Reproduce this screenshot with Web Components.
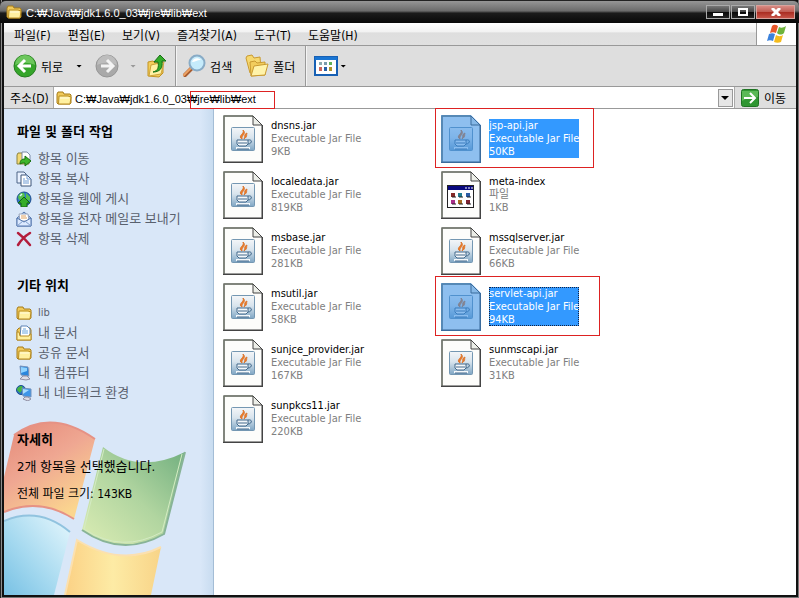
<!DOCTYPE html>
<html lang="ko">
<head>
<meta charset="utf-8">
<title>ext</title>
<style>
    body {
        margin: 0;
        font-family: "DejaVu Sans Condensed", "Noto Sans CJK KR", sans-serif;
        font-size: 11px;
        color: #000;
    }
</style>
</head>
<body>
<xp-window caption="C:₩Java₩jdk1.6.0_03₩jre₩lib₩ext">
    <xp-menubar slot="bars">
        <button>파일(F)</button>
        <button>편집(E)</button>
        <button>보기(V)</button>
        <button>즐겨찾기(A)</button>
        <button>도구(T)</button>
        <button>도움말(H)</button>
    </xp-menubar>
    <xp-toolbar slot="bars"></xp-toolbar>
    <xp-address slot="bars" path="C:₩Java₩jdk1.6.0_03₩jre₩lib₩ext"></xp-address>
    <xp-sidebar slot="side">
        <task-section>
            <span slot="title">파일 및 폴더 작업</span>
            <task-link icon="move">항목 이동</task-link>
            <task-link icon="copy">항목 복사</task-link>
            <task-link icon="web">항목을 웹에 게시</task-link>
            <task-link icon="mail">항목을 전자 메일로 보내기</task-link>
            <task-link icon="delete">항목 삭제</task-link>
        </task-section>
        <task-section>
            <span slot="title">기타 위치</span>
            <task-link icon="folder" latin>lib</task-link>
            <task-link icon="documents">내 문서</task-link>
            <task-link icon="folder">공유 문서</task-link>
            <task-link icon="computer">내 컴퓨터</task-link>
            <task-link icon="network">내 네트워크 환경</task-link>
        </task-section>
        <task-section class="details">
            <span slot="title">자세히</span>
            <task-note>2개 항목을 선택했습니다.</task-note>
            <task-note small>전체 파일 크기: 143KB</task-note>
        </task-section>
    </xp-sidebar>
    <file-list>
        <file-item name="dnsns.jar" kind="Executable Jar File" size="9KB"></file-item>
        <file-item name="jsp-api.jar" kind="Executable Jar File" size="50KB" selected marked></file-item>
        <file-item name="localedata.jar" kind="Executable Jar File" size="819KB"></file-item>
        <file-item name="meta-index" kind="파일" size="1KB" icon="plain"></file-item>
        <file-item name="msbase.jar" kind="Executable Jar File" size="281KB"></file-item>
        <file-item name="mssqlserver.jar" kind="Executable Jar File" size="66KB"></file-item>
        <file-item name="msutil.jar" kind="Executable Jar File" size="58KB"></file-item>
        <file-item name="servlet-api.jar" kind="Executable Jar File" size="94KB" selected focused marked="wide"></file-item>
        <file-item name="sunjce_provider.jar" kind="Executable Jar File" size="167KB"></file-item>
        <file-item name="sunmscapi.jar" kind="Executable Jar File" size="31KB"></file-item>
        <file-item name="sunpkcs11.jar" kind="Executable Jar File" size="220KB"></file-item>
    </file-list>
</xp-window>

<script>
const PAGE = `
    <path d="M1 1h29l9 9v37H1z" fill="#fdfdfb" stroke="#777"/>
    <path d="M1 47V1h29" fill="none" stroke="#6f746a" stroke-width="1.5"/>
    <path d="M0 47.5h40M39.5 10v38" stroke="#444" stroke-width="1.5"/>
    <path d="M30 1v9h9z" fill="#eceee8" stroke="#444"/>`;

const FOLDER = `
    <path d="M1 4l1-2h5l1 2h6l1 1v8l-1 1H2l-1-1z" fill="#f0c95a" stroke="#a67c18"/>
    <path d="M3 6h9l3 1-1 7H2.5z" fill="#fff0a0" stroke="#b98d22"/>
    <path d="M4 8h9" stroke="#fffbe0"/>`;

// name: [width, height, viewBox, shapes]
const ICONS = {
    folder: [16, 16, '0 0 16 16', FOLDER],
    move: [16, 16, '0 0 16 16', `
        <path d="M1 4l1-2h4l1 2h6v9H1z" fill="#f3d873" stroke="#8c8340"/>
        <path d="M6 1h5l3 3v6H6z" fill="#fff" stroke="#7c8ca8"/>
        <path d="M4 13c0-4 2-5 5-5V5l6 5-6 5v-3c-2 0-4 0-5 1z" fill="#3eb52b" stroke="#18720f"/>`],
    copy: [16, 16, '0 0 16 16', `
        <path d="M1 1h7l2 2v9H1z" fill="#e8f1ff" stroke="#4c6487"/>
        <path d="M5 4h6l4 4v7H5z" fill="#fff" stroke="#3c5478"/>
        <path d="M11 4v4h4M7 8h2M7 10h6M7 12h6" fill="none" stroke="#6d9ad3"/>`],
    web: [16, 16, '0 0 16 16', `
        <circle cx="8" cy="8" r="7" fill="#2f79c9" stroke="#1d4d8c"/>
        <path d="M2 6c1-4 4-5 6-4l1 3-3 3-3 1zM10 2l4 4v4l-4-2z" fill="#54c14a"/>
        <path d="M8 6l6 6h-3v4H5v-4H2z" fill="#36ad28" stroke="#12650f"/>
        <path d="M4 5l2-2" stroke="#dff5ff" stroke-width="1.5"/>`],
    mail: [16, 16, '0 0 16 16', `
        <path d="M1 7l7-6 7 6v8H1z" fill="#a9c5ed" stroke="#5577ad"/>
        <path d="M3 3h9l1 7H4z" fill="#fff" stroke="#98a4bb"/>
        <path d="M5 5h5M5 7h6" stroke="#e0a05c"/>
        <path d="M1 7l7 4 7-4v8H1z" fill="#dceaff" stroke="#5577ad"/>
        <path d="M1 15l6-5M15 15l-6-5" stroke="#7f9ecc"/>`],
    delete: [16, 16, '0 0 16 16', `
        <path d="M2 2c4 3 8 7 12 12M14 2C9 5 5 9 2 14" fill="none" stroke="#b31d3c" stroke-width="2.5" stroke-linecap="round"/>`],
    documents: [16, 16, '0 0 16 16', `
        <path d="M1 5l2-2h11l1 2v10H1z" fill="#efca5e" stroke="#a67c18"/>
        <path d="M5 1h6l3 3v8H4z" fill="#fff" stroke="#5d83b7"/>
        <path d="M7 4h3M6 6h6M6 8h6" stroke="#68a4df"/>
        <path d="M1 7h2l1 4h9l1-2h1v6H1z" fill="#fff0a0" stroke="#b98d22"/>`],
    computer: [16, 16, '0 0 16 16', `
        <path d="M4 1l8 1 1 9-8-1z" fill="#2a86dd" stroke="#7592bb"/>
        <path d="M5 2l6 1v3L5 8z" fill="#8fd3ff"/>
        <path d="M13 2l1 1v8l-1 1z" fill="#c9cdd8"/>
        <path d="M7 11h4l3 3-4 1-6-1z" fill="#dedde6" stroke="#8f8fa3"/>`],
    network: [16, 16, '0 0 16 16', `
        <circle cx="5" cy="5" r="4.5" fill="#2870c4" stroke="#1c4f91"/>
        <path d="M1 5c0-3 3-4 5-4l1 3-3 4z" fill="#46b641"/>
        <path d="M6 3l9 1v8l-8-1z" fill="#3d95e8" stroke="#7592bb"/>
        <path d="M7 4l6 1-6 4z" fill="#a7dcff"/>
        <path d="M9 12h3l3 2-3 2-5-2z" fill="#dedde6" stroke="#8f8fa3"/>`],
    back: [24, 24, '0 0 24 24', `
        <circle cx="12" cy="12" r="11" fill="#35a52a" stroke="#267d20"/>
        <path d="M2 11a10 10 0 0 1 20 0c-6-3-14-3-20 0z" fill="#6cc65c"/>
        <path d="M12 6l-6 6 6 6M7 12h11" fill="none" stroke="#fff" stroke-width="3"/>`],
    forward: [24, 24, '0 0 24 24', `
        <circle cx="12" cy="12" r="11" fill="#a9a9a9" stroke="#969696"/>
        <path d="M2 11a10 10 0 0 1 20 0c-6-3-14-3-20 0z" fill="#bdbdbd"/>
        <path d="M12 6l6 6-6 6M17 12H6" fill="none" stroke="#f4f4f4" stroke-width="3"/>`],
    up: [20, 24, '0 0 20 24', `
        <path d="M1 8l5-1 2 2 8-1v11l-4 4-11-1z" fill="#f3ce5b" stroke="#c39425"/>
        <path d="M4 11l13-3-3 12-12 2z" fill="#fff1a3" stroke="#cda239"/>
        <path d="M6 18c5-1 6-5 5-10H7l6-7 6 6h-4c1 7-2 11-9 11z" fill="#35ad2b" stroke="#176f14"/>`],
    search: [24, 24, '0 0 24 24', `
        <path d="M10 14l-7 7" stroke="#a65b2f" stroke-width="4" stroke-linecap="round"/>
        <path d="M9 14l-7 7" stroke="#eda163" stroke-width="2" stroke-linecap="round"/>
        <circle cx="15" cy="9" r="7.5" fill="#c5ebfb" stroke="#88abc6" stroke-width="2"/>
        <path d="M10 8c1-4 6-5 9-2-4 0-6 2-9 2z" fill="#fff"/>`],
    folders: [24, 24, '0 0 24 24', `
        <path d="M1 4l1-2 5-1 2 3 6-1 1 12-11 4z" fill="#f6d86f" stroke="#c99a31"/>
        <path d="M5 8l5-1 2 2 8-1v13l-14 1z" fill="#f2cd5d" stroke="#c99a31"/>
        <path d="M9 12l14-2-3 11-14 1z" fill="#fff3aa" stroke="#c99a31"/>`],
    views: [24, 20, '0 0 24 20', `
        <path d="M1 1h22v18H1z" fill="#fff" stroke="#1760b4" stroke-width="2"/>
        <path d="M1 1h22v3H1z" fill="#1975d3"/>
        <path d="M5 6h3v3H5z" fill="#8babb0"/><path d="M10 6h3v3h-3z" fill="#7b9cac"/><path d="M15 6h3v3h-3z" fill="#60b15a"/>
        <path d="M5 11h3v4H5z" fill="#cc665d"/><path d="M10 11h3v4h-3z" fill="#2860a6"/><path d="M15 11h3v4h-3z" fill="#ad932c"/>`],
    go: [18, 18, '0 0 18 18', `
        <rect x=".5" y=".5" width="17" height="17" rx="2" fill="#2f9632" stroke="#1f7423"/>
        <path d="M1 2h16v6C11 7 7 8 1 12z" fill="#5ab956"/>
        <path d="M3 9h11M9 4l5 5-5 5" fill="none" stroke="#fff" stroke-width="2"/>`],
    flag: [20, 20, '0 0 20 20', `
        <path d="M5 2c2-2 4-1 6 0L9 9C7 8 5 8 3 9z" fill="#e8582b"/>
        <path d="M12 3c2 1 4 1 7-1l-2 7c-2 2-5 2-7 0z" fill="#6db33b"/>
        <path d="M2 10c2-1 4-1 6 0l-2 7c-2-1-4-1-6 0z" fill="#3c82dc"/>
        <path d="M9 11c2 1 4 2 7 0l-2 7c-2 1-5 1-7 0z" fill="#f4bb1d"/>`],
    jar: [40, 48, '0 0 40 48', `
        <defs><linearGradient id="tile" x2="0" y2="1"><stop offset="0" stop-color="#f4f6f8"/><stop offset=".45" stop-color="#d8e4ed"/><stop offset="1" stop-color="#7fa6c4"/></linearGradient></defs>
        ${PAGE}
        <rect x="8.5" y="12.5" width="23" height="23" rx="1" fill="url(#tile)" stroke="#7497b2"/>
        <path d="M19 24c-5-3 3-5 1-9 4 4-2 5-1 9zM21 24c2-3-1-4 3-6-1 3 1 3-3 6z" fill="#ee7c26" stroke="#dc762f"/>
        <path d="M14 25h11v4l-2 2h-7l-2-2z" fill="#f4f8fb" stroke="#42698b"/>
        <path d="M15 28h9" stroke="#42698b"/>
        <path d="M25 25c5-1 4 4 0 4" fill="none" stroke="#42698b"/>
        <path d="M13 33h14" stroke="#f4f8fb" stroke-width="2"/>
        <path d="M14 34h12" stroke="#42698b"/>`],
    plain: [40, 48, '0 0 40 48', `${PAGE}
        <rect x="6.5" y="14.5" width="26" height="22" fill="#fff" stroke="#222"/>
        <path d="M7 15h25v4H7z" fill="#08087d"/>
        <path d="M24 17h2M27 17h2M30 17h2" stroke="#fff"/>
        <path d="M10 22h4v4h-4z" fill="#842b29"/><path d="M17 22h4v4h-4z" fill="#207c91"/><path d="M25 22h4v4h-4z" fill="#2b5ca5"/>
        <path d="M10 29h4v4h-4z" fill="#ab308a"/><path d="M17 29h4v4h-4z" fill="#a86c22"/><path d="M25 29h4v4h-4z" fill="#7c2332"/>
        <path d="M11 26h4M18 26h4M26 26h4M11 33h4M18 33h4M26 33h4" stroke="#222"/>`],
};

class XpIcon extends HTMLElement {
    connectedCallback() {
        if (this.shadowRoot) return;
        this.attachShadow({ mode: 'open' });
        const [width, height, box, shapes] = ICONS[this.getAttribute('name')];
        this.shadowRoot.innerHTML = `
            <style>
                :host { display: block; flex: none; }
                svg { display: block; }
            </style>
            <svg width="${width}" height="${height}" viewBox="${box}" aria-hidden="true">${shapes}</svg>
        `;
    }
}

class XpWindow extends HTMLElement {
    constructor() {
        super();
        this.attachShadow({ mode: 'open' });
        this.shadowRoot.innerHTML = `
            <style>
                :host {
                    display: flex;
                    flex-direction: column;
                    box-sizing: border-box;
                    min-height: 100vh;
                    padding: 0 3px 3px 4px;
                    background: #111;
                    box-shadow: inset 1px 0 #222, inset 2px 0 #8d8d8d, inset -1px -1px #777;
                }
                header {
                    display: flex;
                    align-items: center;
                    height: 23px;
                    gap: 4px;
                    margin: 0 -3px 0 -4px;
                    padding: 0 4px 0 6px;
                    box-sizing: border-box;
                    border-top: 1px solid #222;
                    border-radius: 6px 6px 0 0;
                    background: linear-gradient(#969696, #6b6b6b 45%, #1b1b1b 55%, #080808);
                    color: #fff;
                }
                h1 {
                    flex: 1;
                    margin: 0;
                    padding-top: 2px;
                    font-family: "Liberation Sans", "Noto Sans CJK KR", sans-serif;
                    font-size: 11px;
                    font-weight: normal;
                }
                .controls { display: flex; gap: 1px; }
                .controls button {
                    display: flex;
                    align-items: center;
                    justify-content: center;
                    width: 24px;
                    height: 14px;
                    padding: 0;
                    border: 1px solid #aaa;
                    background: linear-gradient(#777, #444 50%, #080808 50%, #222);
                }
                .controls .close {
                    width: 39px;
                    border-color: #d8a39d;
                    background: linear-gradient(#d88a83, #bf5b51 50%, #a82b20 50%, #c65448);
                }
                main {
                    display: flex;
                    flex: 1;
                    background: #fff;
                }
            </style>
            <header>
                <xp-icon name="folder"></xp-icon>
                <h1></h1>
                <div class="controls">
                    <button aria-label="최소화"><svg width="10" height="8"><path d="M0 5h10v3H0z" fill="#fff"/></svg></button>
                    <button aria-label="최대화"><svg width="10" height="8"><path d="M1 1h8v6H1z" fill="none" stroke="#fff" stroke-width="2"/></svg></button>
                    <button class="close" aria-label="닫기"><svg width="10" height="8"><path d="M1 0l8 8M9 0L1 8" stroke="#fff" stroke-width="3"/></svg></button>
                </div>
            </header>
            <slot name="bars"></slot>
            <main>
                <slot name="side"></slot>
                <slot></slot>
            </main>
        `;
        this.shadowRoot.querySelector('h1').textContent = this.getAttribute('caption');
    }
}

class XpMenubar extends HTMLElement {
    constructor() {
        super();
        this.attachShadow({ mode: 'open' });
        this.shadowRoot.innerHTML = `
            <style>
                :host {
                    display: flex;
                    height: 22px;
                    border-bottom: 1px solid #999;
                    background: linear-gradient(#fff, #f2f2f2 40%, #dedede 45%, #e0e0e0);
                }
                nav {
                    display: flex;
                    flex: 1;
                    gap: 17px;
                    padding-left: 10px;
                }
                ::slotted(button) {
                    padding: 0;
                    border: 0;
                    background: none;
                    color: #000;
                    font-family: inherit;
                    font-size: 12px;
                }
                .logo {
                    display: flex;
                    align-items: center;
                    justify-content: center;
                    width: 39px;
                    border-left: 1px solid #999;
                    background: #fff;
                }
            </style>
            <nav><slot></slot></nav>
            <div class="logo"><xp-icon name="flag"></xp-icon></div>
        `;
    }
}

class XpToolbar extends HTMLElement {
    constructor() {
        super();
        this.attachShadow({ mode: 'open' });
        this.shadowRoot.innerHTML = `
            <style>
                :host {
                    display: flex;
                    align-items: center;
                    height: 40px;
                    padding-left: 9px;
                    border-bottom: 1px solid #999;
                    background: #dedede;
                    font-size: 12px;
                }
                button {
                    display: flex;
                    align-items: center;
                    gap: 4px;
                    padding: 0;
                    border: 0;
                    background: none;
                    color: #000;
                    font: inherit;
                }
                .arrow {
                    width: 6px;
                    height: 3px;
                    margin: 0 13px;
                    background: #000;
                    clip-path: polygon(0 0, 100% 0, 50% 100%);
                }
                .arrow[disabled] {
                    margin: 0 11px;
                    background: #999;
                }
                .near { margin: 0 2px; }
                hr {
                    align-self: stretch;
                    width: 0;
                    margin: 0 5px 0 8px;
                    border: 0;
                    border-left: 1px solid #999;
                    border-right: 1px solid #f4f4f4;
                }
                .folders { margin: 0 2px 0 13px; }
                .views { margin-left: 2px; }
            </style>
            <button><xp-icon name="back"></xp-icon>뒤로</button>
            <button class="arrow" aria-label="뒤로 목록"></button>
            <button disabled aria-label="앞으로"><xp-icon name="forward"></xp-icon></button>
            <button class="arrow" disabled aria-label="앞으로 목록"></button>
            <button aria-label="위로"><xp-icon name="up"></xp-icon></button>
            <hr>
            <button><xp-icon name="search"></xp-icon>검색</button>
            <button class="folders"><xp-icon name="folders"></xp-icon>폴더</button>
            <hr>
            <button class="views" aria-label="보기"><xp-icon name="views"></xp-icon></button>
            <button class="arrow near" aria-label="보기 목록"></button>
        `;
    }
}

class XpAddress extends HTMLElement {
    constructor() {
        super();
        this.attachShadow({ mode: 'open' });
        this.shadowRoot.innerHTML = `
            <style>
                :host {
                    display: flex;
                    align-items: stretch;
                    height: 21px;
                    padding-left: 6px;
                    border-bottom: 1px solid #999;
                    background: #dedede;
                    font-size: 12px;
                }
                label { width: 43px; align-self: center; }
                .field {
                    position: relative;
                    display: flex;
                    flex: 1;
                    align-items: center;
                    gap: 3px;
                    padding: 0 1px 0 2px;
                    border-left: 1px solid #aaa;
                    border-right: 1px solid #aaa;
                    background: #fff;
                }
                input {
                    flex: 1;
                    min-width: 0;
                    padding: 2px 0 0;
                    border: 0;
                    outline: 0;
                    background: none;
                    color: #000;
                    font-family: "Liberation Sans", "Noto Sans CJK KR", sans-serif;
                    font-size: 11px;
                }
                .drop {
                    width: 15px;
                    height: 18px;
                    padding: 0;
                    border: 1px solid #999;
                    background: #e6e6e6;
                }
                .drop svg { display: block; margin: auto; }
                /* frame drawn over the tail of the path */
                .mark {
                    position: absolute;
                    left: 136px;
                    top: 4px;
                    width: 83px;
                    height: 16px;
                    border: 1px solid #d22;
                    pointer-events: none;
                }
                .go {
                    display: flex;
                    align-items: center;
                    gap: 5px;
                    padding: 0 10px 0 6px;
                    border: 0;
                    background: none;
                    color: #000;
                    font: inherit;
                }
            </style>
            <label for="path">주소(D)</label>
            <div class="field">
                <xp-icon name="folder"></xp-icon>
                <input id="path" type="text">
                <button class="drop" aria-label="주소 목록"><svg width="8" height="4"><path d="M0 0h8L4 4z"/></svg></button>
                <div class="mark"></div>
            </div>
            <button class="go"><xp-icon name="go"></xp-icon>이동</button>
        `;
        this.shadowRoot.querySelector('input').value = this.getAttribute('path');
    }
}

class XpSidebar extends HTMLElement {
    constructor() {
        super();
        this.attachShadow({ mode: 'open' });
        this.shadowRoot.innerHTML = `
            <style>
                :host {
                    position: relative;
                    display: block;
                    flex: none;
                    width: 210px;
                    box-sizing: border-box;
                    border-right: 1px solid #a4bdd6;
                    background: linear-gradient(to right, #d9e7f8 94%, #c8dcf0);
                }
                .art {
                    position: absolute;
                    left: 0;
                    bottom: 0;
                }
                .sections {
                    position: relative;
                    display: flex;
                    flex-direction: column;
                    gap: 27px;
                    padding: 13px 0 0 12px;
                }
            </style>
            <svg class="art" width="190" height="180" viewBox="4 415 190 180" aria-hidden="true">
                <defs>
                    <linearGradient id="red" x2=".6" y2="1"><stop offset="0" stop-color="#e48878"/><stop offset=".5" stop-color="#efa792"/><stop offset="1" stop-color="#fbd68f"/></linearGradient>
                    <linearGradient id="green" x1="1" x2="0" y2="1"><stop offset="0" stop-color="#6fae7e"/><stop offset=".5" stop-color="#b1d5a0"/><stop offset="1" stop-color="#dcedb4"/></linearGradient>
                    <linearGradient id="blue" x1="1" x2="0" y2="1"><stop offset="0" stop-color="#e6f7fd"/><stop offset=".6" stop-color="#a3d8ef"/><stop offset="1" stop-color="#78c1e4"/></linearGradient>
                    <linearGradient id="gold"><stop offset="0" stop-color="#fbd185"/><stop offset=".5" stop-color="#fdeba5"/><stop offset="1" stop-color="#f8d488"/></linearGradient>
                </defs>
                <path d="M14 435Q51 408 95 439L74 519Q40 497 4 512V477Z" fill="url(#red)"/>
                <path d="M14 435Q51 408 95 439M74 519Q40 497 4 512" fill="none" stroke="#e69285" stroke-width="2"/>
                <path d="M103 447Q139 475 185 452L164 534Q122 558 82 530Z" fill="url(#green)"/>
                <path d="M185 452L164 534Q122 558 82 530" fill="none" stroke="#88b497" stroke-width="2"/>
                <path d="M104 449L84 529Q122 554 162 532L182 454" fill="none" stroke="#d4ebc4"/>
                <path d="M4 521Q39 506 70 532L54 595H4Z" fill="url(#blue)"/>
                <path d="M4 521Q39 506 70 532" fill="none" stroke="#91c3df" stroke-width="2"/>
                <path d="M77 540Q121 567 161 547L151 595H65Z" fill="url(#gold)"/>
                <path d="M65 595L77 540Q121 567 161 547" fill="none" stroke="#fbe0b0" stroke-width="2"/>
            </svg>
            <div class="sections"><slot></slot></div>
        `;
    }
}

class TaskSection extends HTMLElement {
    constructor() {
        super();
        this.attachShadow({ mode: 'open' });
        this.shadowRoot.innerHTML = `
            <style>
                :host { display: block; line-height: 20px; }
                h2 {
                    margin: 0 0 7px 1px;
                    font-size: 13px;
                    font-weight: bold;
                }
            </style>
            <h2><slot name="title"></slot></h2>
            <slot></slot>
        `;
    }
}

class TaskLink extends HTMLElement {
    constructor() {
        super();
        this.attachShadow({ mode: 'open' });
        this.shadowRoot.innerHTML = `
            <style>
                :host { display: block; font-size: 13px; }
                :host([latin]) { font-size: 11px; }
                a {
                    display: flex;
                    align-items: center;
                    gap: 6px;
                    height: 20px;
                    color: #59616e;
                    text-decoration: none;
                }
                a:hover { text-decoration: underline; }
            </style>
            <a href="#"><xp-icon name="${this.getAttribute('icon')}"></xp-icon><slot></slot></a>
        `;
    }
}

class TaskNote extends HTMLElement {
    constructor() {
        super();
        this.attachShadow({ mode: 'open' });
        this.shadowRoot.innerHTML = `
            <style>
                :host {
                    display: block;
                    height: 20px;
                    margin: 0 0 7px 1px;
                    font-size: 13px;
                    white-space: nowrap;
                }
                :host([small]) { font-size: 12px; }
            </style>
            <slot></slot>
        `;
    }
}

class FileList extends HTMLElement {
    constructor() {
        super();
        this.attachShadow({ mode: 'open' });
        this.shadowRoot.innerHTML = `
            <style>
                :host {
                    display: grid;
                    flex: 1;
                    grid-template-columns: repeat(auto-fill, 218px);
                    grid-auto-rows: 48px;
                    align-content: start;
                    row-gap: 8px;
                    padding: 6px 0 8px 9px;
                }
            </style>
            <slot></slot>
        `;
    }
}

class FileItem extends HTMLElement {
    constructor() {
        super();
        this.attachShadow({ mode: 'open' });
        this.shadowRoot.innerHTML = `
            <style>
                :host {
                    position: relative;
                    display: flex;
                    align-items: flex-start;
                    gap: 8px;
                    line-height: 13px;
                }
                .text {
                    margin-top: 4px;
                    color: #808080;
                    white-space: nowrap;
                }
                .text div { height: 13px; }
                .text .name { color: #000; }
                :host([selected]) .text,
                :host([selected]) .name {
                    background: #3399ff;
                    color: #fff;
                }
                :host([focused]) .text { outline: 1px dotted #124; outline-offset: -1px; }
                .icon { position: relative; }
                :host([selected]) .icon::after {
                    content: "";
                    position: absolute;
                    inset: 0;
                    background: rgba(51, 140, 230, 0.55);
                    clip-path: polygon(0 0, 75% 0, 100% 21%, 100% 100%, 0 100%);
                }
                /* red frame around a highlighted file */
                :host([marked])::after {
                    content: "";
                    position: absolute;
                    left: -6px;
                    top: -7px;
                    width: 157px;
                    height: 58px;
                    border: 1px solid #d22;
                    pointer-events: none;
                }
                :host([marked="wide"])::after { width: 163px; }
            </style>
            <div class="icon"><xp-icon name="${this.getAttribute('icon') || 'jar'}"></xp-icon></div>
            <div class="text">
                <div class="name">${this.getAttribute('name')}</div>
                <div>${this.getAttribute('kind')}</div>
                <div>${this.getAttribute('size')}</div>
            </div>
        `;
    }
}

customElements.define('xp-icon', XpIcon);
customElements.define('xp-window', XpWindow);
customElements.define('xp-menubar', XpMenubar);
customElements.define('xp-toolbar', XpToolbar);
customElements.define('xp-address', XpAddress);
customElements.define('xp-sidebar', XpSidebar);
customElements.define('task-section', TaskSection);
customElements.define('task-link', TaskLink);
customElements.define('task-note', TaskNote);
customElements.define('file-list', FileList);
customElements.define('file-item', FileItem);
</script>
</body>
</html>
